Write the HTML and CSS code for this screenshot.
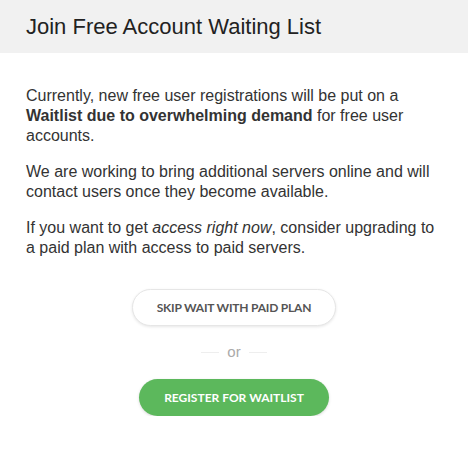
FILE: index.html
```html
<!DOCTYPE html>
<html lang="en">
<head>
  <meta charset="utf-8">
  <link rel="stylesheet" href="styles.css">
  <title>Join Free Account Waiting List</title>
</head>
<body>
  <div class="modal">
    <div class="modal-header">
      <h2>Join Free Account Waiting List</h2>
    </div>
    <div class="modal-body">
      <p>Currently, new free user registrations will be put on a
        <b>Waitlist due to overwhelming demand</b> for free user accounts.</p>
      <p>We are working to bring additional servers online and will
        contact users once they become available.</p>
      <p>If you want to get <i>access right now</i>, consider upgrading to
        a paid plan with access to paid servers.</p>
      <div class="actions">
        <button class="btn btn-light">Skip wait with paid plan</button>
        <div class="or">or</div>
        <button class="btn btn-green">Register for waitlist</button>
      </div>
    </div>
  </div>
</body>
</html>
```

FILE: styles.css
```css
body {
  margin: 0;
  font-family: "Liberation Sans", Arial, sans-serif;
  color: #333;
  background: #fff;
}

.modal-header {
  background: #f1f1f1;
  height: 53px;
  display: flex;
  align-items: center;
  padding: 0 26px;
}

.modal-header h2 {
  margin: 0;
  font-size: 22px;
  font-weight: normal;
  color: #222;
}

.modal-body {
  padding: 33px 26px 0;
  font-size: 16px;
  line-height: 20px;
}

.modal-body p {
  margin: 0 0 16px;
}

.actions {
  display: flex;
  flex-direction: column;
  align-items: center;
  padding-top: 15px;
}

.btn {
  font-family: Lato, sans-serif;
  font-weight: bold;
  font-size: 12px;
  text-transform: uppercase;
  border-radius: 20px;
  height: 37px;
  cursor: pointer;
}

.btn-light {
  width: 204px;
  background: #fff;
  color: #555;
  border: 1px solid #e6e6e6;
  box-shadow: 0 1px 3px #0000001a;
  letter-spacing: -0.2px;
}

.btn-green {
  width: 190px;
  background: #5cb85c;
  color: #fff;
  border: none;
  box-shadow: 0 1px 3px #00000026;
}

.or {
  display: flex;
  align-items: center;
  gap: 8px;
  color: #aaa;
  font-size: 15px;
  margin: 16px 0 17px;
}

.or::before, .or::after {
  content: "";
  width: 18px;
  border-top: 1px solid #eee;
}
```
